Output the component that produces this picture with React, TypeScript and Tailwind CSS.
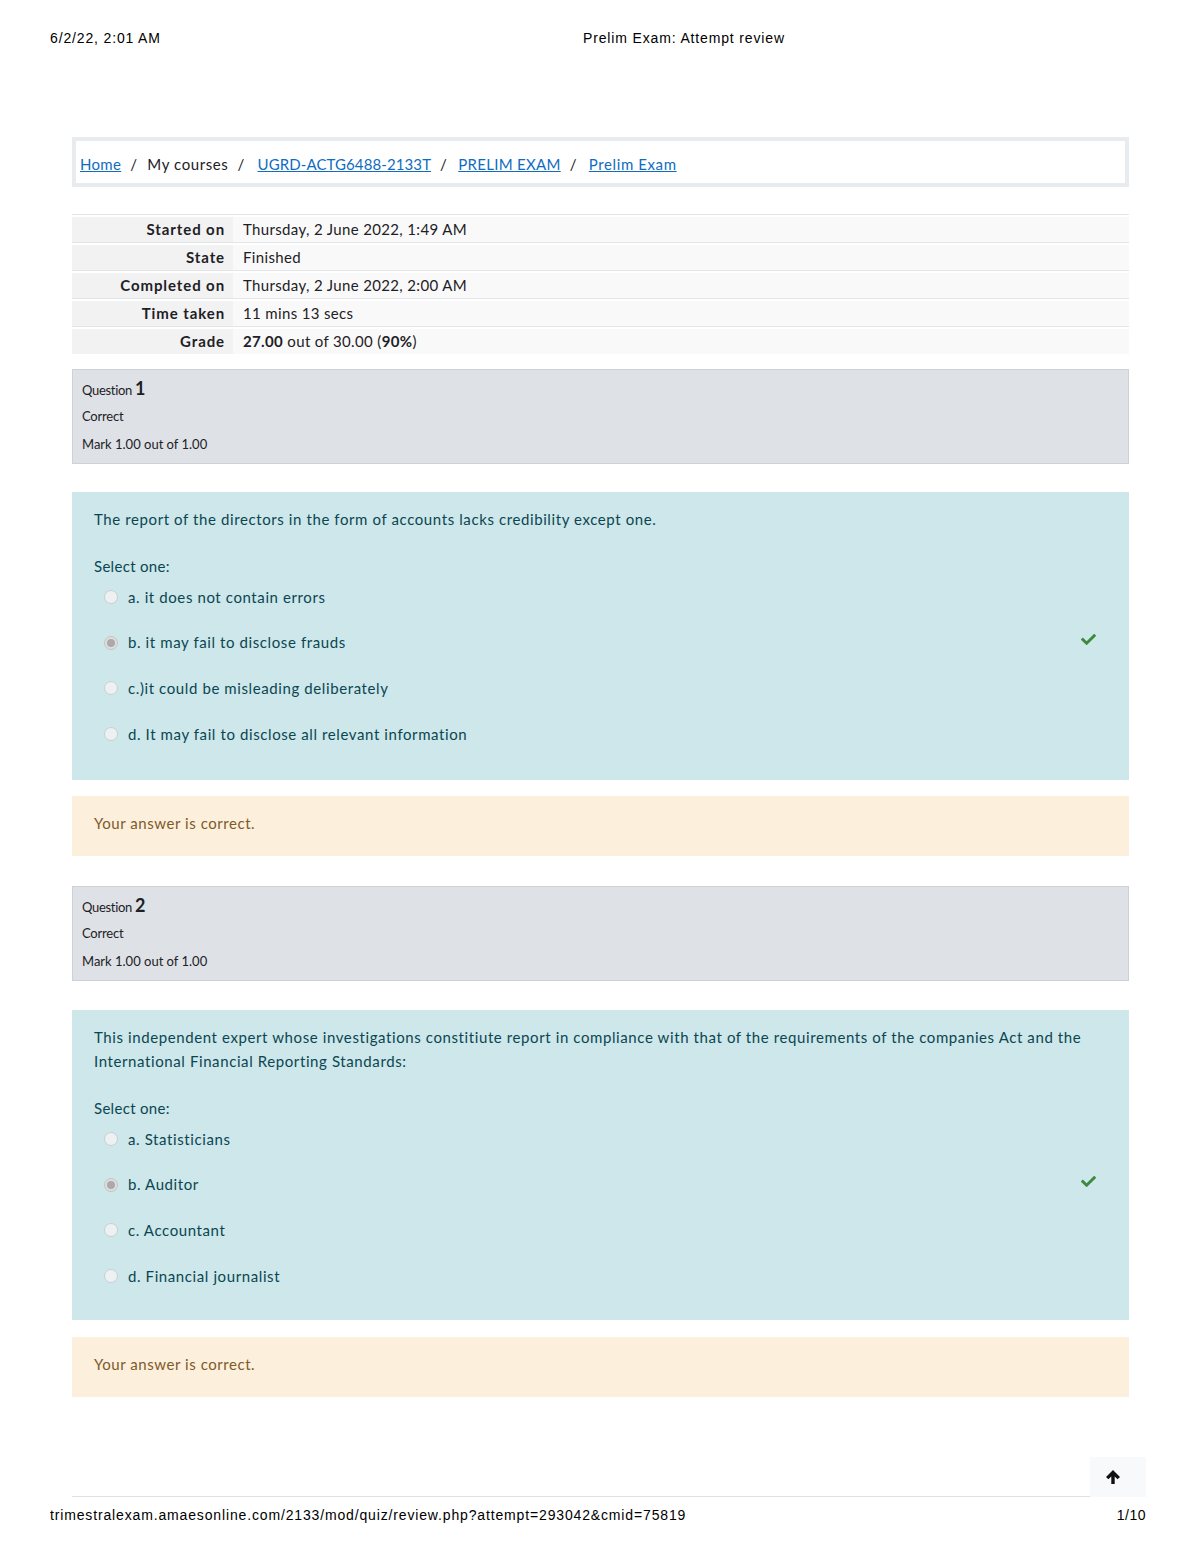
import { FaCheck } from 'react-icons/fa';

const body = { fontFamily: 'Lato, "Noto Sans", sans-serif' };
const arial = { fontFamily: '"Liberation Sans", Arial, sans-serif' };

const summary = [
    { label: 'Started on', value: <span>Thursday, 2 June 2022, 1:49 AM</span> },
    { label: 'State', value: <span>Finished</span> },
    { label: 'Completed on', value: <span>Thursday, 2 June 2022, 2:00 AM</span> },
    { label: 'Time taken', value: <span>11 mins 13 secs</span> },
    { label: 'Grade', value: <span><b>27.00</b> out of 30.00 (<b>90%</b>)</span> },
];

const questions = [
    {
        num: 1,
        text: 'The report of the directors in the form of accounts lacks credibility except one.',
        options: [
            'a. it does not contain errors',
            'b. it may fail to disclose frauds',
            'c.)it could be misleading deliberately',
            'd. It may fail to disclose all relevant information',
        ],
        selected: 1,
        height: 'h-[288px]',
    },
    {
        num: 2,
        text: 'This independent expert whose investigations constitiute report in compliance with that of the requirements of the companies Act and the International Financial Reporting Standards:',
        options: ['a. Statisticians', 'b. Auditor', 'c. Accountant', 'd. Financial journalist'],
        selected: 1,
        height: 'h-[310px]',
    },
];

function Radio({ checked }: { checked: boolean }) {
    return (
        <span className={`w-[14px] h-[14px] rounded-full border shrink-0 flex items-center justify-center ${checked ? 'border-[#c4c4c4] bg-[#dedede]' : 'border-[#c9cfd3] bg-[#eef1f2]'}`}>
            {checked && <span className="w-[8px] h-[8px] rounded-full bg-[#aaaaaa]" />}
        </span>
    );
}

function ArrowUp() {
    return (
        <svg width="16" height="16" viewBox="0 0 16 16">
            <path d="M8 1 L15 8 L12.6 10.3 L9.7 7.4 V15 H6.3 V7.4 L3.4 10.3 L1 8 Z" fill="#111" />
        </svg>
    );
}

function Question({ q, first }: { q: typeof questions[number]; first: boolean }) {
    return (
        <div className="w-[1057px]">
            <div className={`${first ? 'mt-[15px]' : 'mt-[30px]'} h-[95px] bg-[#dee2e6] border border-[#cdd2d7] pl-[9px] pt-[5px] text-[#1d2125]`}>
                <div className="text-[13px] leading-[26px] tracking-[-0.3px]">
                    Question <span className="text-[18px] font-bold">{q.num}</span>
                </div>
                <div className="text-[13px] leading-[26px] tracking-[-0.2px]">Correct</div>
                <div className="text-[13px] leading-[30px] tracking-[0px]">Mark 1.00 out of 1.00</div>
            </div>
            <div className={`${first ? 'mt-[28px]' : 'mt-[29px]'} ${q.height} bg-[#cde7eb] pl-[22px] pr-[33px] pt-[15px] text-[#0b4650] text-[15px]`}>
                <p className="leading-[24px] tracking-[0.6px]">{q.text}</p>
                <p className="mt-[23px] leading-[24px] tracking-[0.3px]">Select one:</p>
                <div className="mt-[7px] flex flex-col gap-[21.6px]">
                    {q.options.map((o, i) => (
                        <div key={o} className="flex items-center h-[24px] pl-[10px]">
                            <Radio checked={i === q.selected} />
                            <span className="ml-[10px] tracking-[0.6px]">{o}</span>
                            {i === q.selected && <FaCheck className="ml-auto text-[#3b8a3d] w-[15px] h-[15px] -mt-[6px]" />}
                        </div>
                    ))}
                </div>
            </div>
            <div className={`${first ? 'mt-[16px]' : 'mt-[17px]'} h-[60px] bg-[#fcefdc] pl-[22px] pt-[15px] leading-[24px] text-[15px] text-[#7d5a29] tracking-[0.55px]`}>
                Your answer is correct.
            </div>
        </div>
    );
}

export default function App() {
    return (
        <div className="w-[1200px] min-h-[1553px] bg-white relative" style={body}>
            <div className="flex pt-[30px] text-[14px] leading-[16px] text-black tracking-[0.85px]" style={arial}>
                <span className="ml-[50px] w-[533px]">6/2/22, 2:01 AM</span>
                <span>Prelim Exam: Attempt review</span>
            </div>

            <main className="ml-[72px] w-[1074px] mt-[91px]">
                <div className="w-[1057px] h-[50px] border-[4px] border-[#e9ecef] pl-[4px] pt-[4px] flex items-center text-[15px] text-[#1d2125] tracking-[0.3px]">
                    <a className="text-[#0f6cbf] underline">Home</a>
                    <span className="ml-[9px] mr-[10px]">/</span>
                    <span className="tracking-[0.6px]">My courses</span>
                    <span className="mx-[9px]">/</span>
                    <a className="text-[#0f6cbf] underline ml-[4px] tracking-[0.1px]">UGRD-ACTG6488-2133T</a>
                    <span className="mx-[9px]">/</span>
                    <a className="text-[#0f6cbf] underline ml-[2px]">PRELIM EXAM</a>
                    <span className="mx-[9px]">/</span>
                    <a className="text-[#0f6cbf] underline ml-[3px] tracking-[0.6px]">Prelim Exam</a>
                </div>

                <div className="w-[1057px] mt-[27px] text-[15px] text-[#1d2125]">
                    {summary.map(r => (
                        <div key={r.label} className="flex h-[28px] border-t border-[#e3e6e9] pt-[2px]">
                            <div className="w-[161px] bg-[#f2f2f2] pr-[8px] font-bold tracking-[0.9px] flex items-center justify-end">{r.label}</div>
                            <div className="flex-1 bg-[#f9f9f9] pl-[10px] tracking-[0.35px] flex items-center">{r.value}</div>
                        </div>
                    ))}
                </div>

                {questions.map((q, i) => (
                    <Question key={q.num} q={q} first={i === 0} />
                ))}

                <div className="mt-[60px] flex items-end">
                    <div className="flex-1 border-b border-[#dee2e6]" />
                    <div className="w-[56px] h-[40px] bg-[#f8f9fa] flex items-center pl-[15px]">
                        <ArrowUp />
                    </div>
                </div>
            </main>

            <div className="flex mt-[10px] text-[14px] leading-[16px] text-black" style={arial}>
                <span className="ml-[50px] tracking-[0.85px]">trimestralexam.amaesonline.com/2133/mod/quiz/review.php?attempt=293042&amp;cmid=75819</span>
                <span className="ml-auto mr-[54px] tracking-[0.5px]">1/10</span>
            </div>
        </div>
    );
}
